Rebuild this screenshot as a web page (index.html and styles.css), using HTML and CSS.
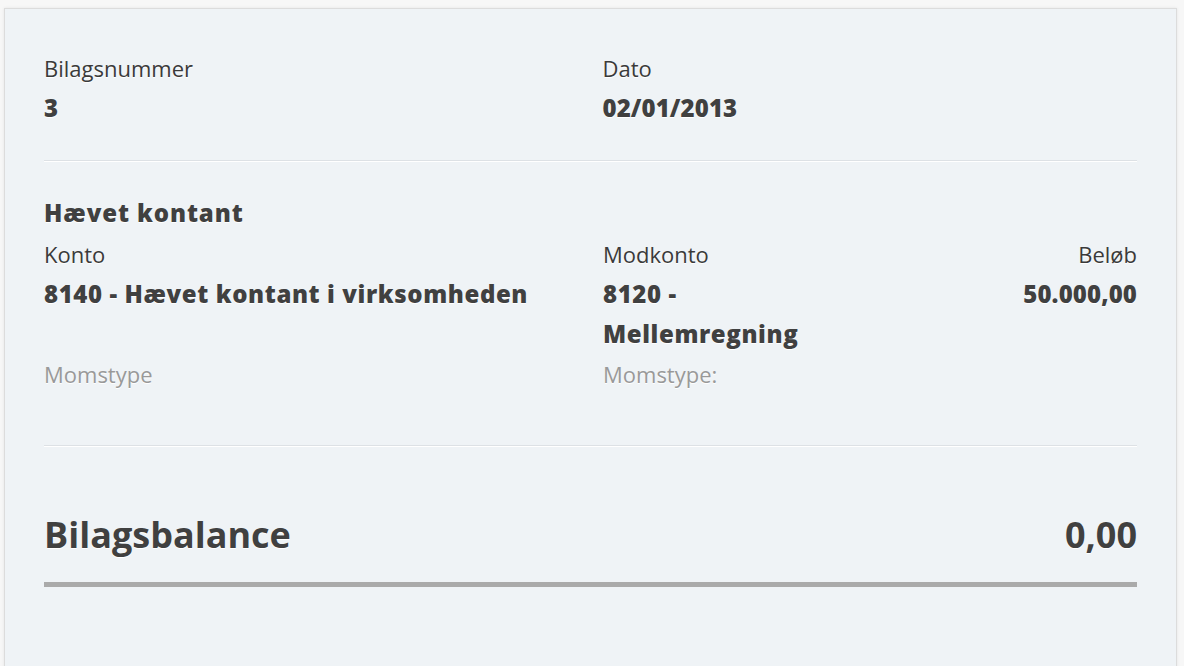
FILE: index.html
```html
<!DOCTYPE html>
<html lang="da">
<head>
<meta charset="utf-8">
<title>Bilag</title>
<link rel="stylesheet" href="styles.css">
</head>
<body>
<div class="card">
  <div class="head-grid">
    <div>
      <div class="label">Bilagsnummer</div>
      <div class="value num">3</div>
    </div>
    <div>
      <div class="label">Dato</div>
      <div class="value num">02/01/2013</div>
    </div>
  </div>
  <hr class="divider">
  <div class="section-title">Hævet kontant</div>
  <div class="line-grid">
    <div class="label">Konto</div>
    <div class="label">Modkonto</div>
    <div class="label right">Beløb</div>
    <div class="value">8140 - Hævet kontant i virksomheden</div>
    <div class="value">8120 - Mellemregning</div>
    <div class="value num right">50.000,00</div>
    <div class="muted">Momstype</div>
    <div class="muted">Momstype:</div>
    <div></div>
  </div>
  <hr class="divider divider-low">
  <div class="balance">
    <span>Bilagsbalance</span>
    <span>0,00</span>
  </div>
  <div class="balance-bar"></div>
</div>
</body>
</html>
```

FILE: styles.css
```css
html, body {
  margin: 0;
  padding: 0;
  background: #f7f7f7;
  height: 100%;
  overflow: hidden;
}
body {
  padding: 8px 7px 0 4px;
  font-family: "Open Sans", "Liberation Sans", sans-serif;
  color: #404040;
  text-shadow: 0 1px 0 #fff;
}
.card {
  background: #eff3f6;
  border: 1px solid #dcdcdc;
  border-bottom: none;
  box-shadow: 0 0 3px rgba(0,0,0,0.08);
  padding: 39px 39px 40px 39px;
  height: 100%;
  box-sizing: border-box;
}
.head-grid {
  display: grid;
  grid-template-columns: 1fr 1fr;
  column-gap: 24px;
}
.line-grid {
  display: grid;
  grid-template-columns: 535px 1fr 1fr;
  column-gap: 24px;
}
.label {
  font-size: 22px;
  line-height: 40px;
  color: #3a3a3a;
}
.value {
  font-size: 24px;
  font-weight: 800;
  line-height: 40px;
  letter-spacing: 0.6px;
}
.value.num {
  letter-spacing: 0.1px;
}
.right {
  text-align: right;
}
.muted {
  font-size: 22px;
  line-height: 40px;
  color: #999;
}
.divider {
  border: 0;
  border-top: 1px solid #dde1e5;
  border-bottom: 1px solid #fff;
  margin: 32px 0 30px;
  height: 0;
}
.divider-low {
  margin: 51px 0 63px;
}
.section-title {
  font-size: 24px;
  font-weight: 800;
  line-height: 42px;
  letter-spacing: 0.9px;
}
.balance {
  display: flex;
  justify-content: space-between;
  font-size: 36px;
  font-weight: 700;
  line-height: 50px;
}
.balance-bar {
  height: 5px;
  background: #aaa;
  margin-top: 22px;
}
```
